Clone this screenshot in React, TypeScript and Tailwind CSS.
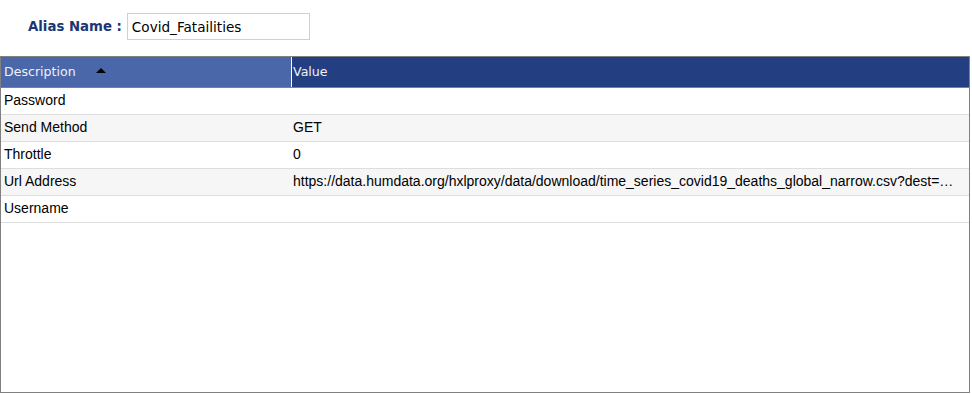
const rows = [
  { name: "Password", value: "" },
  { name: "Send Method", value: "GET" },
  { name: "Throttle", value: "0" },
  {
    name: "Url Address",
    value:
      "https://data.humdata.org/hxlproxy/data/download/time_series_covid19_deaths_global_narrow.csv?dest=data_edit&filter01=explode&explode-header-att01=date&explode-value-att01=value",
  },
  { name: "Username", value: "" },
];

export default function App() {
  return (
    <div className="w-[972px] h-[394px] bg-white overflow-hidden">
      <div className="flex items-center pt-[13px] pl-[28px]">
        <span
          className="text-[13.3px] font-bold text-[#1c3672] mr-[5px]"
          style={{ fontFamily: "Verdana, 'DejaVu Sans', sans-serif" }}
        >
          Alias Name :
        </span>
        <input
          readOnly
          value="Covid_Fatailities"
          className="w-[183px] h-[27px] border border-[#d0d0d0] px-[4px] text-[13.6px] text-black outline-none"
          style={{ fontFamily: "Verdana, 'DejaVu Sans', sans-serif" }}
        />
      </div>

      <div
        className="mt-[16px] w-[970px] h-[337px] border border-[#808080] flex flex-col"
        style={{ fontFamily: "'Liberation Sans', Arial, sans-serif" }}
      >
        <div
          className="flex h-[31px] border-b border-[#808080] text-[12.6px] text-[#eef1f8]"
          style={{ fontFamily: "Verdana, 'DejaVu Sans', sans-serif" }}
        >
          <div className="relative w-[290px] bg-[#4a67a9] flex items-center pl-[3px] pt-[1px]">
            Description
            <svg
              className="absolute left-[95px] top-[11px]"
              width="10"
              height="5"
              viewBox="0 0 10 5"
            >
              <polygon points="5,0 10,5 0,5" fill="#000" />
            </svg>
          </div>
          <div className="flex-1 bg-[#243f81] border-l border-white flex items-center pl-[1px] pt-[1px]">
            Value
          </div>
        </div>

        {rows.map((r, i) => (
          <div
            key={r.name}
            className={`flex h-[27px] border-b border-[#dedede] text-[14px] text-black ${
              i % 2 === 1 ? "bg-[#f6f6f6]" : "bg-white"
            }`}
          >
            <div className="w-[291px] flex items-center pl-[3px] pb-[1px]">{r.name}</div>
            <div className="flex-1 min-w-0 flex items-center pl-[1px] pr-[8px] pb-[1px]">
              <span className="truncate">{r.value}</span>
            </div>
          </div>
        ))}
      </div>
    </div>
  );
}
